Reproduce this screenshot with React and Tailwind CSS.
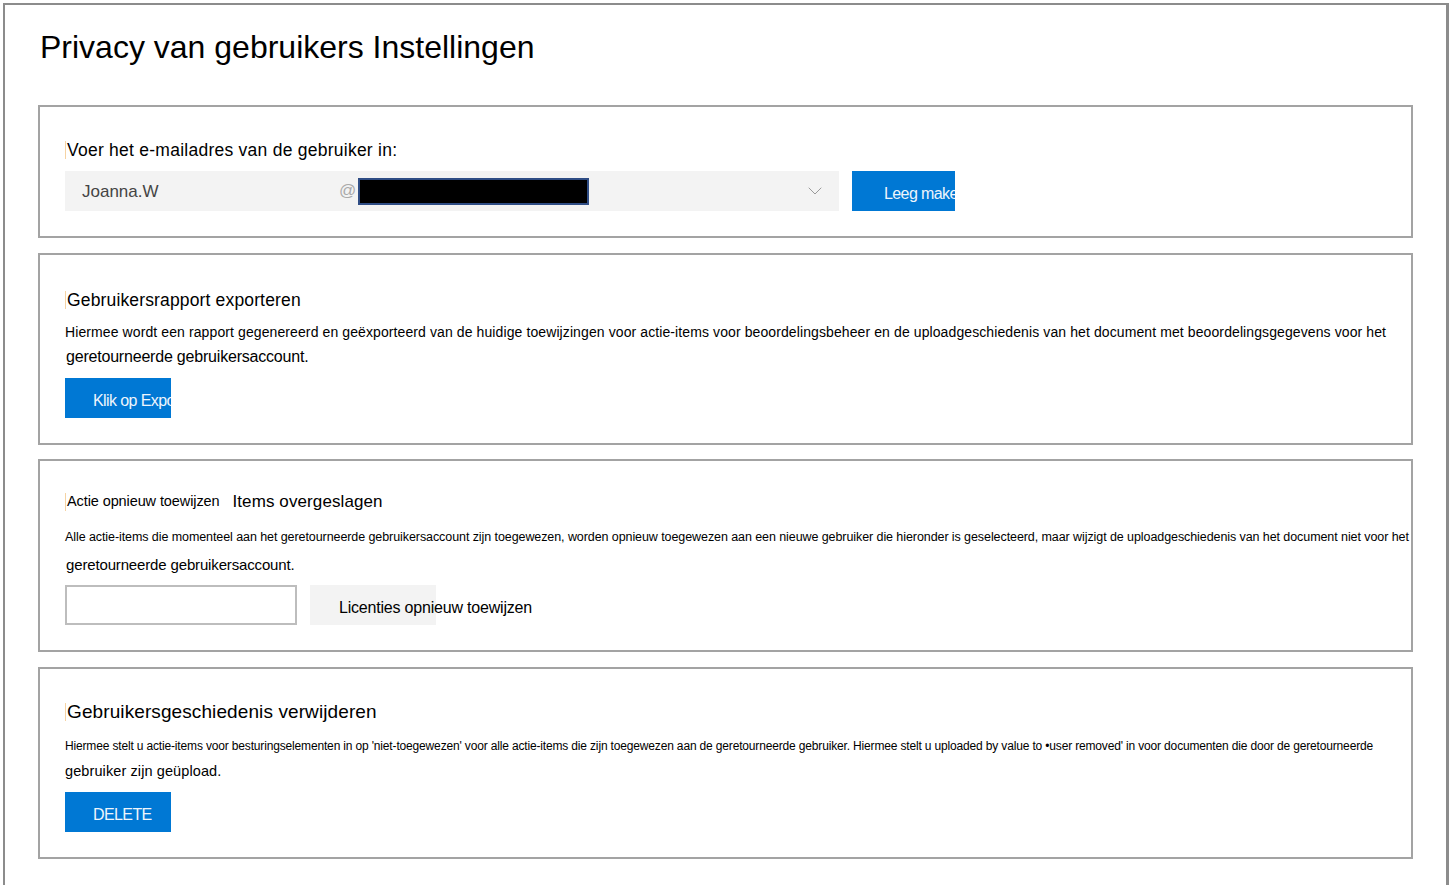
import { ChevronDown } from "lucide-react";

const Panel = ({ className, children }) => (
  <section className={`border-2 border-[#a3a3a3] bg-white px-[25px] ${className}`}>{children}</section>
);

const Caret = () => <span className="mr-px inline-block h-[18px] w-px bg-[#f6d3a3] align-middle" />;

const BlueButton = ({ children, className = "" }) => (
  <button className={`flex h-10 items-center overflow-hidden whitespace-nowrap bg-[#0078d4] pt-[5px] text-[16px] tracking-[-0.6px] text-[#eef5fc] ${className}`}>
    {children}
  </button>
);

export default function App() {
  return (
    <div className="min-h-[900px] bg-white p-[3px] font-['Liberation_Sans',Arial,sans-serif] text-black">
      <div className="min-h-[900px] border-2 border-r-[3px] border-[#8c8c8c] pl-[33px] pr-[33px] pt-[24px]">
        <h1 className="ml-[2px] text-[32px] leading-[36px]">Privacy van gebruikers Instellingen</h1>

        <Panel className="mt-[40px] pb-[25px] pt-[31px]">
          <p className="flex h-6 items-center text-[17.5px] tracking-[0.25px]">
            <Caret />
            Voer het e-mailadres van de gebruiker in:
          </p>
          <div className="mt-[9px] flex items-start gap-[13px]">
            <div className="relative flex h-10 w-[774px] items-center bg-[#f3f3f3]">
              <span className="ml-[17px] w-[257px] pt-px text-[17px] text-[#444]">Joanna.W</span>
              <span className="text-[17px] text-[#aaa]">@</span>
              <span className="ml-[2px] h-[27px] w-[231px] border-2 border-[#2f4d85] bg-black" />
              <ChevronDown className="ml-auto mr-[12px] h-6 w-6 text-[#9a9a9a]" strokeWidth={1} />
            </div>
            <BlueButton className="w-[103px] pl-[32px]">Leeg maken</BlueButton>
          </div>
        </Panel>

        <Panel className="mt-[15px] pb-[25px] pt-[33px]">
          <h2 className="flex h-6 items-center text-[17.5px] tracking-[0.15px]">
            <Caret />
            Gebruikersrapport exporteren
          </h2>
          <p className="mt-[10px] whitespace-nowrap text-[14px] leading-5 tracking-[0.1px]">
            Hiermee wordt een rapport gegenereerd en geëxporteerd van de huidige toewijzingen voor actie-items voor beoordelingsbeheer en de uploadgeschiedenis van het document met beoordelingsgegevens voor het
          </p>
          <p className="ml-px mt-1 text-[16px] leading-[22px] tracking-[-0.2px]">geretourneerde gebruikersaccount.</p>
          <BlueButton className="mt-[10px] w-[106px] pl-[28px]">Klik op Exporteren</BlueButton>
        </Panel>

        <Panel className="mt-[14px] pb-[25px] pt-[29px]">
          <div className="flex h-6 items-center">
            <Caret />
            <span className="text-[14.5px] tracking-[-0.1px]">Actie opnieuw toewijzen</span>
            <span className="ml-[13px] text-[17px] tracking-[0.1px]">Items overgeslagen</span>
          </div>
          <p className="mt-[14px] whitespace-nowrap text-[12.5px] leading-[18px] tracking-[-0.08px]">
            Alle actie-items die momenteel aan het geretourneerde gebruikersaccount zijn toegewezen, worden opnieuw toegewezen aan een nieuwe gebruiker die hieronder is geselecteerd, maar wijzigt de uploadgeschiedenis van het document niet voor het
          </p>
          <p className="ml-px mt-[9px] text-[15px] leading-5 tracking-[-0.15px]">geretourneerde gebruikersaccount.</p>
          <div className="mt-[10px] flex gap-[13px]">
            <input className="h-10 w-[232px] border-2 border-[#bdbdbd] bg-white" />
            <button className="flex h-10 w-[126px] items-center whitespace-nowrap bg-[#f3f3f3] pl-[29px] pt-[5px] text-[16px] tracking-[-0.2px]">
              Licenties opnieuw toewijzen
            </button>
          </div>
        </Panel>

        <Panel className="mt-[15px] pb-[25px] pt-[30px]">
          <h2 className="flex h-[26px] items-center text-[19px] tracking-[0.1px]">
            <Caret />
            Gebruikersgeschiedenis verwijderen
          </h2>
          <p className="mt-[12px] whitespace-nowrap text-[12px] leading-[18px] tracking-[-0.16px]">
            Hiermee stelt u actie-items voor besturingselementen in op 'niet-toegewezen' voor alle actie-items die zijn toegewezen aan de geretourneerde gebruiker. Hiermee stelt u uploaded by value to •user removed' in voor documenten die door de geretourneerde
          </p>
          <p className="mt-[6px] text-[14.5px] leading-5 tracking-[0.1px]">gebruiker zijn geüpload.</p>
          <BlueButton className="mt-[11px] w-[106px] pl-[28px]">DELETE</BlueButton>
        </Panel>
      </div>
    </div>
  );
}
